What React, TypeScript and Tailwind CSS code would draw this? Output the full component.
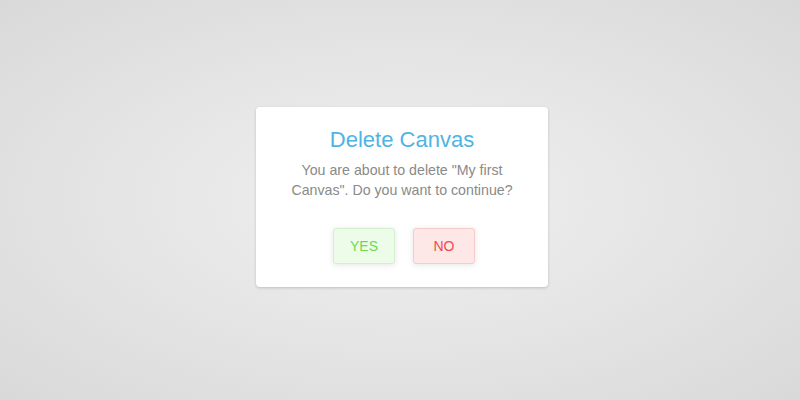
export default function App() {
  return (
    <div
      className="w-[800px] h-[400px] flex items-center justify-center bg-[radial-gradient(ellipse_at_center,#f0f0f0_0%,#e6e6e6_45%,#d9d9d9_100%)]"
      style={{ fontFamily: '"Liberation Sans", Arial, sans-serif' }}
    >
      <div className="ml-[4px] mb-[6px] w-[292px] h-[180px] bg-white rounded-[4px] shadow-[0_1px_3px_rgba(0,0,0,0.18)] flex flex-col items-center pt-[18px]">
        <h1 className="text-[22px] leading-[30px] text-[#4fb4e3]">Delete Canvas</h1>
        <p className="mt-[5px] text-[14.2px] leading-[20px] text-[#8a8a8a] text-center w-[240px]">
          You are about to delete "My first Canvas". Do you want to continue?
        </p>
        <div className="mt-[28px] ml-[4px] flex gap-[18px]">
          <button className="w-[62px] h-[36px] rounded-[3px] bg-[#edfce9] border border-[#d2f1ca] text-[#6dd94f] text-[14px] shadow-[0_1px_6px_rgba(0,0,0,0.1)]">
            YES
          </button>
          <button className="w-[62px] h-[36px] rounded-[3px] bg-[#fde7e7] border border-[#f5cccc] text-[#ee4b4b] text-[14px] shadow-[0_1px_6px_rgba(0,0,0,0.1)]">
            NO
          </button>
        </div>
      </div>
    </div>
  );
}
